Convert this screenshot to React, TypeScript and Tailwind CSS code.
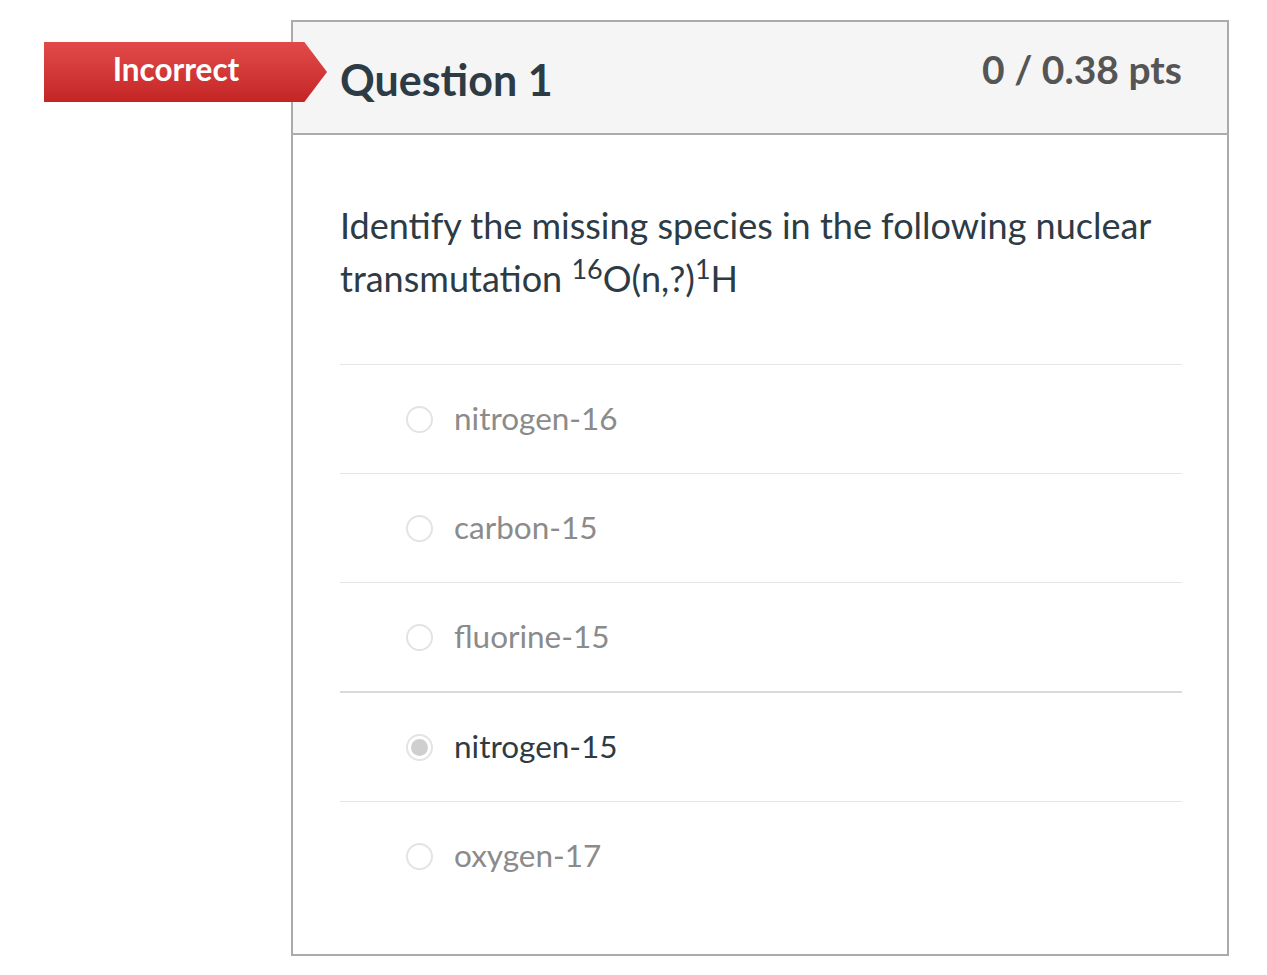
import React from "react";

type Answer = { label: string; selected?: boolean };

const ANSWERS: Answer[] = [
  { label: "nitrogen-16" },
  { label: "carbon-15" },
  { label: "fluorine-15" },
  { label: "nitrogen-15", selected: true },
  { label: "oxygen-17" },
];

function Radio({ checked }: { checked?: boolean }) {
  return (
    <span className="flex h-[27px] w-[27px] shrink-0 items-center justify-center rounded-full border-2 border-[#e3e3e3] bg-white">
      {checked && <span className="h-[17px] w-[17px] rounded-full bg-[#cfcfcf]" />}
    </span>
  );
}

function IncorrectBadge() {
  return (
    <div className="absolute left-[-249px] top-[20px] h-[60px] w-[283px] [clip-path:polygon(0_0,92%_0,100%_50%,92%_100%,0_100%)] bg-gradient-to-b from-[#e24a4a] to-[#c42424]">
      <div className="flex h-full w-[264px] items-center justify-center pb-[4px] text-[31.5px] font-bold text-white">
        Incorrect
      </div>
    </div>
  );
}

export default function App() {
  return (
    <div className="min-h-screen bg-white font-['Lato','Liberation_Sans',sans-serif]">
      <div className="pl-[291px] pt-[20px]">
        <div className="relative h-[936px] w-[938px] border-2 border-[#ababab]">
          <IncorrectBadge />

          {/* header */}
          <div className="flex h-[113px] justify-between border-b-2 border-[#ababab] bg-[#f5f5f5] pl-[47px] pr-[45px]">
            <h2 className="mt-[32px] text-[43px] font-bold leading-[1.2] text-[#2d3b45]">Question 1</h2>
            <div className="mt-[24px] text-[39px] font-bold leading-[1.2] text-[#555]">0 / 0.38 pts</div>
          </div>

          {/* body */}
          <div className="pl-[47px] pr-[45px]">
            <p className="mt-[64px] text-[36px] leading-[53px] text-[#2d3b45]">
              Identify the missing species in the following nuclear transmutation{" "}
              <sup className="text-[27px] leading-none">16</sup>O(n,?)<sup className="text-[27px] leading-none">1</sup>H
            </p>

            <div className="mt-[59px]">
              {ANSWERS.map((a) => (
                <div
                  key={a.label}
                  className={
                    a.selected
                      ? "flex h-[110px] items-center border-t-2 border-[#dadada]"
                      : "flex h-[109px] items-center border-t border-[#e6e6e6]"
                  }
                >
                  <div className="ml-[66px] flex items-center gap-[21px]">
                    <Radio checked={a.selected} />
                    <span
                      className={
                        a.selected
                          ? "text-[31.5px] leading-none text-[#2d3b45]"
                          : "text-[31.5px] leading-none text-[#8b8b8b]"
                      }
                    >
                      {a.label}
                    </span>
                  </div>
                </div>
              ))}
            </div>
          </div>
        </div>
      </div>
    </div>
  );
}
